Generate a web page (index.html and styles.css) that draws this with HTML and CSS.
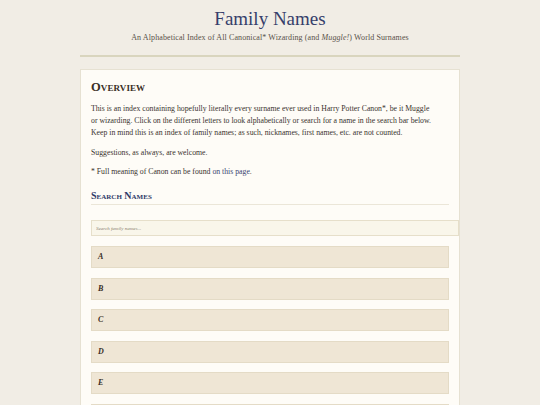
FILE: index.html
```html
<!DOCTYPE html>
<html>
<head>
<meta charset="utf-8">
<link rel="stylesheet" href="styles.css">
</head>
<body>
<div class="wrap">
  <header class="masthead">
    <h1 class="title">Family Names</h1>
    <p class="subtitle">An Alphabetical Index of All Canonical* Wizarding (and <i>Muggle!</i>) World Surnames</p>
  </header>
  <main class="card">
    <h2 class="overview">Overview</h2>
    <p class="para first">This is an index containing hopefully literally every surname ever used in Harry Potter Canon*, be it Muggle<br>or wizarding. Click on the different letters to look alphabetically or search for a name in the search bar below. Keep in mind this is an index of family names; as such, nicknames, first names, etc. are not counted.</p>
    <p class="para">Suggestions, as always, are welcome.</p>
    <p class="para">* Full meaning of Canon can be found <a class="link" href="#">on this page</a>.</p>
    <h3 class="search-title">Search Names</h3>
    <input class="search" type="text" placeholder="Search family names...">
    <div class="letters">
      <div class="letter">A</div>
      <div class="letter">B</div>
      <div class="letter">C</div>
      <div class="letter">D</div>
      <div class="letter">E</div>
      <div class="letter">F</div>
    </div>
  </main>
</div>
</body>
</html>
```
FILE: styles.css
```css
html, body {
  margin: 0;
  padding: 0;
  background: #f1ede5;
  font-family: "Liberation Serif", "DejaVu Serif", serif;
  color: #3d3530;
  overflow: hidden;
}
.wrap {
  width: 380px;
  margin: 0 auto;
}
.masthead {
  text-align: center;
  padding-top: 8px;
  padding-bottom: 12px;
  border-bottom: 2px solid #d9d5be;
}
.title {
  margin: 0;
  font-size: 19px;
  line-height: 22px;
  font-weight: normal;
  color: #363f6b;
}
.subtitle {
  margin: 3px 0 0;
  font-size: 8px;
  line-height: 10px;
  color: #5a524a;
  letter-spacing: 0.1px;
}
.card {
  margin-top: 12px;
  background: #fefcf7;
  border: 1px solid #e6e1d2;
  padding: 9px 10px 20px;
  height: 400px;
}
.overview {
  margin: 0;
  font-size: 12.5px;
  line-height: 16px;
  font-variant: small-caps;
  font-weight: bold;
  color: #3a2e25;
  letter-spacing: 0.1px;
}
.para {
  margin: 0 0 7px;
  font-size: 7.75px;
  line-height: 12px;
  color: #3a332e;
}
.para.first {
  margin-top: 8px;
  margin-bottom: 8px;
}
.link {
  color: #3a4470;
  text-decoration: none;
}
.search-title {
  margin: 12px 0 0;
  font-size: 10px;
  line-height: 12px;
  font-variant: small-caps;
  font-weight: bold;
  color: #2f3a68;
  padding-bottom: 2px;
  border-bottom: 1px solid #ebe6d8;
}
.search {
  display: block;
  margin-top: 15px;
  width: 100%;
  box-sizing: content-box;
  padding: 4px 4px;
  height: 6px;
  font-family: "Liberation Serif", serif;
  font-size: 5px;
  font-style: italic;
  background: #f9f6ea;
  border: 1px solid #e6dfca;
  outline: none;
}
.search::placeholder {
  color: #8a8070;
}
.letters {
  display: flex;
  flex-direction: column;
  gap: 9.6px;
  margin-top: 10px;
}
.letter {
  height: 20px;
  line-height: 20px;
  background: #efe6d5;
  border: 1px solid #e4dbc6;
  padding-left: 6px;
  font-size: 8px;
  font-style: italic;
  font-weight: bold;
  color: #3a2e25;
}
```
